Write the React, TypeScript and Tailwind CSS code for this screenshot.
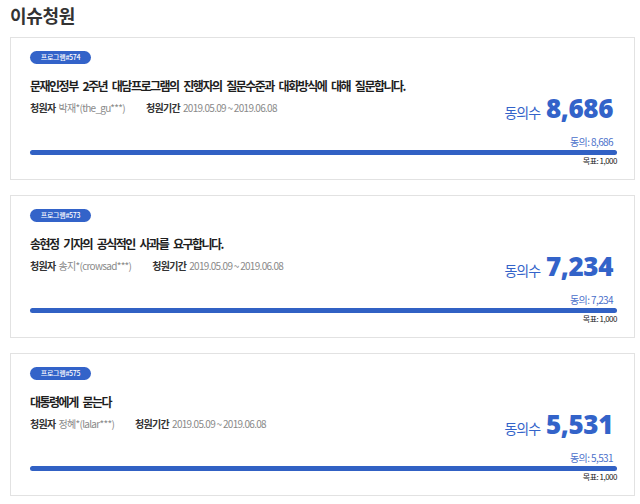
import React from "react";

type Petition = {
  no: string;
  title: string;
  author: string;
  period: string;
  count: string;
};

const petitions: Petition[] = [
  {
    no: "프로그램#574",
    title: "문재인정부 2주년 대담프로그램의 진행자의 질문수준과 대화방식에 대해 질문합니다.",
    author: "박재*(the_gu***)",
    period: "2019.05.09 ~ 2019.06.08",
    count: "8,686",
  },
  {
    no: "프로그램#573",
    title: "송현정 기자의 공식적인 사과를 요구합니다.",
    author: "송지*(crowsad***)",
    period: "2019.05.09 ~ 2019.06.08",
    count: "7,234",
  },
  {
    no: "프로그램#575",
    title: "대통령에게 묻는다",
    author: "정혜*(lalar***)",
    period: "2019.05.09 ~ 2019.06.08",
    count: "5,531",
  },
];

const kr = { fontFamily: '"Noto Sans CJK KR", "Noto Sans", sans-serif' };
const num = { fontFamily: '"Open Sans", "Noto Sans CJK KR", sans-serif' };

function Card({ p }: { p: Petition }) {
  return (
    <div className="w-[625px] border border-[#e2e2e2] bg-white pl-[19px] pr-[17px] pt-[13px] pb-[13px]">
      <div className="flex items-start">
        <div className="flex-1 flex flex-col items-start">
          <div
            className="h-[13px] w-[61px] rounded-full bg-[#3363c9] text-white text-[7px] leading-[13px] text-center tracking-[-0.3px] font-medium"
            style={kr}
          >
            {p.no}
          </div>
          <div
            className="mt-[12px] h-[20px] text-[12px] leading-[20px] font-semibold text-[#1e1e1e] tracking-[-1.5px] [word-spacing:3.5px]"
            style={kr}
          >
            {p.title}
          </div>
          <div className="mt-[5px] h-[14px] flex items-center text-[10px] leading-[14px] tracking-[-0.7px]" style={kr}>
            <span className="font-bold text-[#333]">청원자</span>
            <span className="ml-[3px] text-[#8a8a8a]">{p.author}</span>
            <span className="ml-[21px] font-bold text-[#333]">청원기간</span>
            <span className="ml-[3px] text-[#8a8a8a]">{p.period}</span>
          </div>
        </div>
        <div className="mt-[42px] h-[30px] pr-[4px] flex items-baseline text-[#3363c9]">
          <span className="text-[14px] leading-[30px] tracking-[-1px]" style={kr}>
            동의수
          </span>
          <span className="ml-[6px] text-[26px] leading-[30px] font-extrabold tracking-[-0.4px]" style={num}>
            {p.count}
          </span>
        </div>
      </div>
      <div className="mt-[12px] h-[14px] pr-[4px] text-right text-[10px] leading-[14px] text-[#4a6fca] tracking-[-0.6px]" style={kr}>
        동의: {p.count}
      </div>
      <div className="mt-[1px] h-[5px] rounded-full bg-[#3161c4]" />
      <div className="mt-[1px] h-[10px] text-right text-[8px] leading-[10px] text-[#222] tracking-[-0.5px]" style={kr}>
        목표: 1,000
      </div>
    </div>
  );
}

export default function App() {
  return (
    <div className="w-[640px] h-[504px] bg-white pl-[10px] overflow-hidden" style={kr}>
      <div className="h-[30px] pt-[2px] text-[18px] leading-[26px] font-bold text-[#333] tracking-[-0.3px]">이슈청원</div>
      <div className="mt-[7px] flex flex-col gap-[15px]">
        {petitions.map((p) => (
          <Card key={p.no} p={p} />
        ))}
      </div>
    </div>
  );
}
